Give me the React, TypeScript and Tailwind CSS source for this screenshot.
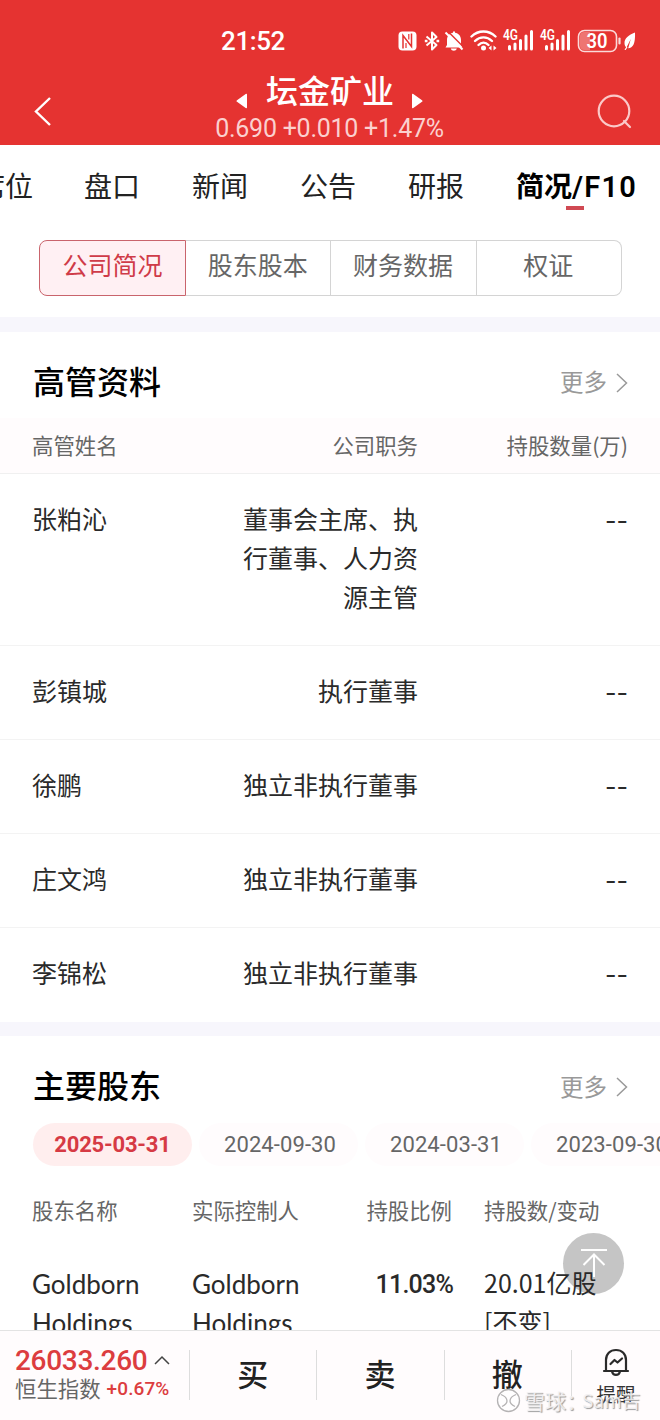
import React from "react";
import { clsx } from "clsx";

const tabs = ["盘口", "新闻", "公告", "研报"];

const segments = ["公司简况", "股东股本", "财务数据", "权证"];

const managers = [
  { name: "张粕沁", title: "董事会主席、执行董事、人力资源主管", shares: "--" },
  { name: "彭镇城", title: "执行董事", shares: "--" },
  { name: "徐鹏", title: "独立非执行董事", shares: "--" },
  { name: "庄文鸿", title: "独立非执行董事", shares: "--" },
  { name: "李锦松", title: "独立非执行董事", shares: "--" },
];

const dates = ["2025-03-31", "2024-09-30", "2024-03-31", "2023-09-30"];

const trades = ["买", "卖", "撤"];

function NfcIcon() {
  return (
    <svg width="19" height="20" viewBox="0 0 19 20" fill="none">
      <rect x="0.5" y="0.5" width="18" height="19" rx="4" fill="#fff" />
      <path d="M5 17.500V4.500l8.500 11V2.500" stroke="#e53331" strokeWidth="1.500" />
      <path d="M8 17V12M10.800 3v5.500" stroke="#e53331" strokeWidth="1.200" />
    </svg>
  );
}

function BluetoothIcon() {
  return (
    <svg width="16" height="20" viewBox="0 0 16 20" fill="none" stroke="#fff" strokeWidth="2" strokeLinejoin="round">
      <path d="M2.500 5.500 12.500 14l-4.500 4.500v-17L12.500 6l-10 8.500" />
      <path d="M.8 10h2.700M12.500 10h2.700" strokeWidth="2.600" />
    </svg>
  );
}

function MutedIcon() {
  return (
    <svg width="20" height="20" viewBox="0 0 20 20" fill="none">
      <path d="M3 14V9c0-4 2.500-6.800 6-7.200V.5h2v1.300c3.500.4 6 3.200 6 7.200v5l1.500 2.500h-17z" fill="#fff" />
      <path d="M6.800 17.500h6c-.6 3-5.400 3-6 0z" fill="#fff" />
      <path d="M3.500 0 20 16.500" stroke="#e53331" strokeWidth="1.500" />
      <path d="M1.500 1.500 18.500 18.500" stroke="#fff" strokeWidth="2" />
    </svg>
  );
}

function WifiIcon() {
  return (
    <svg width="28" height="21" viewBox="0 0 28 21" fill="none" stroke="#fff" strokeWidth="2.400" strokeLinecap="round">
      <path d="M1.500 6.500c7-6.600 17-6.600 24 0" />
      <path d="M5 11c5-4.800 12-4.800 17 0" />
      <path d="M8.500 15c3-3 7-3 10 0" />
      <circle cx="13.500" cy="18" r="2.500" fill="#fff" stroke="none" />
      <path d="m18.500 18 3-2.500v5zM26.500 18l-3-2.500v5z" fill="#fff" stroke="none" />
    </svg>
  );
}

function SignalIcon() {
  return (
    <svg className="overflow-visible" width="31" height="21" viewBox="0 0 31 21" fill="none">
      <text x="0" y="9.500" fontSize="14" fontWeight="600" fill="#fff" textLength="15" lengthAdjust="spacingAndGlyphs" fontFamily="Roboto, sans-serif">
        4G
      </text>
      <path d="M6.500 16.500V19M12 14v5M17.500 10.500V19M23 6v13M28.500 1.500V19" stroke="#fff" strokeWidth="3" strokeLinecap="round" />
    </svg>
  );
}

function BatteryIcon() {
  return (
    <svg width="46" height="24" viewBox="0 0 46 24" fill="none">
      <rect x="1.500" y="1.500" width="38" height="21" rx="6" stroke="#fbdada" strokeWidth="1.600" />
      <path d="M7 3h6v18H7c-2.500 0-4-1.500-4-4V7c0-2.500 1.500-4 4-4z" fill="#ee7572" />
      <path d="M42.500 9.500v5" stroke="#fbdada" strokeWidth="2.200" strokeLinecap="round" />
      <text x="20" y="19" textAnchor="middle" fontSize="20" fontWeight="600" fill="#fff" textLength="21" lengthAdjust="spacingAndGlyphs" fontFamily="Roboto, sans-serif">
        30
      </text>
    </svg>
  );
}

function LeafIcon() {
  return (
    <svg width="12" height="18" viewBox="0 0 12 18">
      <path d="M11 .5C4.500 3 .5 6.500.5 11c0 2.200.8 3.800 2 4.600L6.800 7 4.200 16.300C9 16 11.500 11.500 11 .5z" fill="#fff" />
      <path d="M3 15 1 17.800" stroke="#fff" strokeWidth="1.200" />
    </svg>
  );
}

function MoreLink() {
  return (
    <div className="flex items-center gap-[8px] text-[23.500px] leading-8 text-[#999]">
      <span className="-mt-[2px]">更多</span>
      <svg className="mt-px" width="14" height="22" viewBox="0 0 14 22" fill="none" stroke="#999" strokeWidth="1.500">
        <path d="m2 2 9.500 9L2 20" />
      </svg>
    </div>
  );
}

function Header() {
  return (
    <header className="h-[145px] shrink-0 bg-[#e53331] text-white">
      <div className="flex h-[70px] items-center pl-[221px] pt-[11px]">
        <span className="w-[177px] pt-px font-[Roboto] text-[26px] font-medium tracking-[-0.400px]">21:52</span>
        <div className="flex items-center">
          <NfcIcon />
          <div className="ml-[7px]"><BluetoothIcon /></div>
          <div className="ml-[4px]"><MutedIcon /></div>
          <div className="ml-[6px]"><WifiIcon /></div>
          <div className="ml-[5px]"><SignalIcon /></div>
          <div className="ml-[6px]"><SignalIcon /></div>
          <div className="ml-[6px]"><BatteryIcon /></div>
          <div className="ml-px"><LeafIcon /></div>
        </div>
      </div>
      <div className="flex justify-between pl-[33px] pr-[28px]">
        <svg className="mt-[26px]" width="20" height="32" viewBox="0 0 20 32" fill="none" stroke="#fff" strokeWidth="2.400">
          <path d="M17 2 3 15.500 17 29" />
        </svg>
        <div className="ml-[9px] flex w-[240px] flex-col items-center">
          <div className="flex h-[42px] items-center">
            <svg className="mt-[20px]" width="12" height="16" viewBox="0 0 12 16" fill="#fff">
              <path d="M11 1.500v13c0 .8-.7 1-1.300.5L1 8.800c-.7-.5-.7-1.100 0-1.600L9.700 1c.6-.5 1.300-.3 1.300.5z" />
            </svg>
            <h1 className="-mt-[5px] ml-[18px] mr-[17px] text-[32px] font-medium leading-[42px]">坛金矿业</h1>
            <svg className="mt-[20px]" width="12" height="16" viewBox="0 0 12 16" fill="#fff">
              <path d="M1 1.500v13c0 .8.7 1 1.300.5L11 8.800c.7-.5.7-1.100 0-1.600L2.300 1C1.700.5 1 .7 1 1.500z" />
            </svg>
          </div>
          <p className="mt-[2px] whitespace-nowrap font-[Roboto] text-[25px] leading-[30px] tracking-[-0.250px] text-[#fbd0cf]">0.690 +0.010 +1.47%</p>
        </div>
        <svg className="-mr-px mt-[23px]" width="36" height="36" viewBox="0 0 36 36" fill="none" stroke="#fbc9c8" strokeWidth="2.200">
          <circle cx="17" cy="18" r="15.300" />
          <path d="m27 28 6 6" strokeLinecap="round" />
        </svg>
      </div>
    </header>
  );
}

function Tabs() {
  return (
    <nav className="flex h-[95px] shrink-0 items-start overflow-hidden pt-[19px] text-[28px] leading-[42px] text-[#222]">
      <span className="-ml-[23px] mr-[51px] shrink-0">席位</span>
      {tabs.map((tab) => (
        <span key={tab} className="mr-[52px] shrink-0">{tab}</span>
      ))}
      <div className="flex shrink-0 flex-col items-center font-bold text-black">
        <span>
          简况<span className="font-[Roboto] text-[29px] font-semibold tracking-[1.200px]">/F10</span>
        </span>
        <i className="-mt-[2px] mr-[4px] h-1 w-[18px] bg-[#d04953]" />
      </div>
    </nav>
  );
}

function Segments() {
  return (
    <div className="mx-[39px] flex h-14 w-[583px] shrink-0 text-[25px] text-[#666]">
      {segments.map((label, i) => (
        <button
          key={label}
          className={clsx(
            "flex items-center justify-center border pb-1.5",
            i === 0
              ? "w-[147px] rounded-l-lg border-[#c9646c] bg-[#fff0f3] text-[#cf3b48]"
              : "flex-1 border-l-0 border-[#d4d4d4] pr-px",
            i === segments.length - 1 && "rounded-r-lg",
          )}
        >
          {label}
        </button>
      ))}
    </div>
  );
}

function Managers() {
  return (
    <section className="h-[690px] shrink-0">
      <div className="flex h-[86px] items-center justify-between pl-[33px] pr-[31px] pt-[14px]">
        <h2 className="-mt-[5px] text-[32px] font-medium text-black">高管资料</h2>
        <MoreLink />
      </div>
      <div className="flex h-[56px] items-center border-b border-[#f0f0f0] bg-[#fffcfd] px-8 text-[21.400px] text-[#666]">
        <span className="w-[200px]">高管姓名</span>
        <span className="w-[186px] text-right">公司职务</span>
        <span className="flex-1 text-right">持股数量(万)</span>
      </div>
      {managers.map((m) => (
        <div key={m.name} className="flex border-b border-[#f3f3f3] px-8 pb-[29px] pt-[25px] text-[25px] leading-[39px] text-[#2a2a2a] last:border-b-0">
          <span className="w-[200px]">{m.name}</span>
          <span className="w-[186px] pl-[10px] text-right">{m.title}</span>
          <span className="-mb-[3px] flex-1 pt-[3px] text-right font-[Inter]">{m.shares}</span>
        </div>
      ))}
    </section>
  );
}

function Holders() {
  return (
    <section className="relative h-[294px] shrink-0 overflow-hidden">
      <div className="absolute left-[563px] top-[197px] flex size-[61px] justify-center rounded-full bg-[#c5c5c5]">
        <svg className="mt-[15px]" width="28" height="30" viewBox="0 0 28 30" fill="none" stroke="#fff" strokeWidth="2">
          <path d="M1 2h26M14 7v22M3.500 17 14 6.500 24.500 17" />
        </svg>
      </div>
      <div className="relative">
        <div className="flex h-[87px] items-center justify-between pl-[33px] pr-[31px] pt-[14px]">
          <h2 className="-mt-[5px] text-[32px] font-medium text-black">主要股东</h2>
          <MoreLink />
        </div>
        <div className="flex gap-[7px] overflow-hidden pl-[33px] font-[Roboto] text-[22px]">
          {dates.map((d, i) => (
            <span
              key={d}
              className={clsx(
                "flex h-[43px] w-[159px] shrink-0 items-center justify-center rounded-full",
                i === 0 ? "bg-[#ffeeee] font-bold tracking-[-0.200px] text-[#d63a44]" : "bg-[#fffcfd] pl-[3px] tracking-[0.100px] text-[#666]",
              )}
            >
              {d}
            </span>
          ))}
        </div>
        <div className="mt-[28px] flex pl-8 text-[21.400px] leading-8 text-[#666]">
          <span className="w-[160px]">股东名称</span>
          <span className="w-[160px]">实际控制人</span>
          <span className="w-[100px] text-right">持股比例</span>
          <span className="ml-8">持股数/变动</span>
        </div>
        <div className="mt-[37px] flex pl-8 text-[25px] leading-[39px] text-[#2a2a2a]">
          <span className="w-[160px] pt-[2px] font-[Lato] text-[26px]">Goldborn<br />Holdings</span>
          <span className="w-[160px] pt-[2px] font-[Lato] text-[26px]">Goldborn<br />Holdings</span>
          <span className="w-[101px] pt-[2px] text-right font-[Roboto] font-medium tracking-[-0.800px]">11.03%</span>
          <span className="ml-[31px]">20.01亿股<br />[不变]</span>
        </div>
      </div>
    </section>
  );
}

function BottomBar() {
  return (
    <footer className="relative flex h-[90px] shrink-0 border-t border-[#e3e3e3] bg-[#fffcfd]">
      <div className="w-[189px] pl-[15px] pt-[15px]">
        <div className="flex items-center gap-[7px] font-[Roboto] text-[28px] font-medium leading-[30px] tracking-[-0.300px] text-[#dc3d3f]">
          26033.260
          <svg className="-mt-[3px]" width="16" height="10" viewBox="0 0 16 10" fill="none" stroke="#444" strokeWidth="1.500">
            <path d="m1 9 7-7 7 7" />
          </svg>
        </div>
        <div className="-mt-[2px] flex items-center gap-[6px] whitespace-nowrap text-[21.400px] leading-[25px] text-[#666]">
          恒生指数
          <span className="pt-[2px] font-[Roboto] text-[19px] font-medium tracking-[0.100px] text-[#dc3d3f]">+0.67%</span>
        </div>
      </div>
      {trades.map((t) => (
        <div key={t} className="flex w-[127.300px] pt-[19px]">
          <i className="h-[50px] w-px bg-[#ddd]" />
          <span className="-mt-[2px] flex-1 pr-px text-center text-[31px] font-medium leading-[50px] text-[#222]">{t}</span>
        </div>
      ))}
      <div className="flex flex-1 pt-[19px]">
        <i className="h-[50px] w-px bg-[#ddd]" />
        <div className="-mt-[2px] flex flex-1 flex-col items-center text-[19.500px] leading-[28px] text-[#333]">
          <svg className="mb-[3px]" width="28" height="29" viewBox="0 0 28 29" fill="none" stroke="#2a2a2a" strokeWidth="2.200" strokeLinejoin="round" strokeLinecap="round">
            <path d="M2 23h24M4 22.500V12C4 6 8 2 14 2s10 4 10 10v10.500" />
            <path d="m8.500 16 4-4 3 2.500 4.500-4M10 23.500c1 4.500 7 4.500 8 0" />
          </svg>
          提醒
        </div>
      </div>
      <div className="absolute left-[496px] top-[56px] flex items-center whitespace-nowrap text-[21px] leading-[26px] text-[#f4f2f3]/90 [text-shadow:1px_1px_1px_#999]">
        <svg className="mr-[3px]" width="25" height="25" viewBox="0 0 25 25" fill="none" stroke="#b5b3b4" strokeWidth="1.300">
          <circle cx="12.500" cy="12.500" r="11" fill="#fff" fillOpacity="0.700" />
          <path d="M5 6.500c5 2 6 5 6 6.500s-2 4-5 5.500M20 6.500c-5 2-6 5-6 6.500s2 4 5 5.500" />
        </svg>
        雪球：
        <span className="-ml-[5px] text-[19px]">Sam吉</span>
      </div>
    </footer>
  );
}

export default function App() {
  return (
    <div className="flex h-[1420px] w-[660px] flex-col overflow-hidden bg-white font-['Noto_Sans_CJK_SC',sans-serif]">
      <Header />
      <Tabs />
      <Segments />
      <div className="mt-[21px] h-[15px] shrink-0 bg-[#f7f6fc]" />
      <Managers />
      <div className="h-[14px] shrink-0 bg-[#f7f6fc]" />
      <Holders />
      <BottomBar />
    </div>
  );
}
